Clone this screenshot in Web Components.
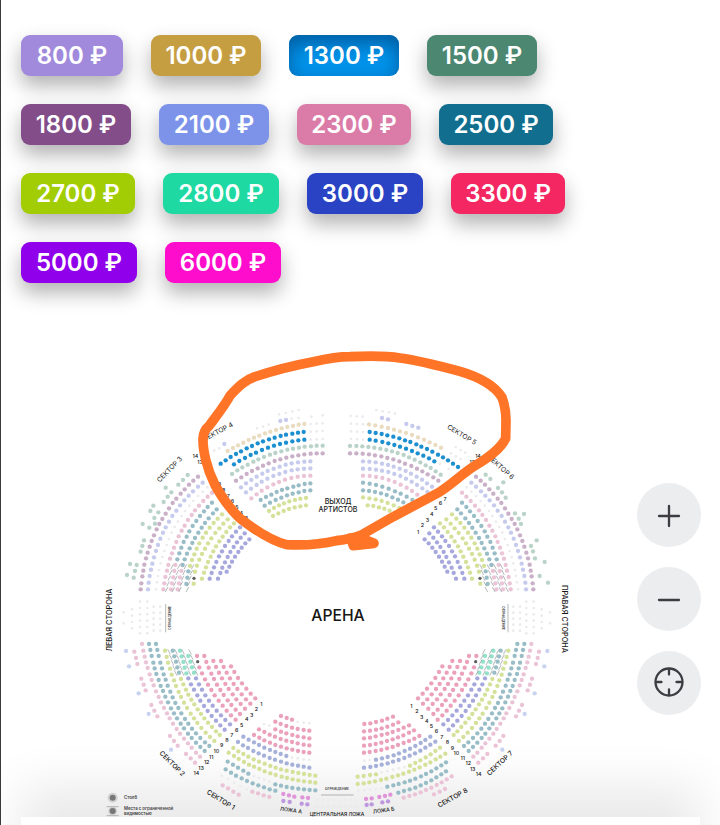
<!DOCTYPE html>
<html lang="ru">
<head>
<meta charset="utf-8">
<meta name="viewport" content="width=device-width, initial-scale=1">
<title>Выбор мест</title>
<style>
body { margin: 0; background: #fff; font-family: Inter, "Open Sans", sans-serif; color: #111; }
</style>
</head>
<body>
<ticket-page>
  <price-list slot="prices">
    <price-chip size="s" color="#a18adb">800 ₽</price-chip>
    <price-chip size="m" color="#c59e42">1000 ₽</price-chip>
    <price-chip size="m" color="#0092e9" selected>1300 ₽</price-chip>
    <price-chip size="m" color="#4b8771">1500 ₽</price-chip>
    <price-chip size="m" color="#834d89">1800 ₽</price-chip>
    <price-chip size="m" color="#7d93e9">2100 ₽</price-chip>
    <price-chip size="l" color="#db7ba8">2300 ₽</price-chip>
    <price-chip size="l" color="#116e8e">2500 ₽</price-chip>
    <price-chip size="l" color="#a2cd05">2700 ₽</price-chip>
    <price-chip size="xl" color="#1ed9a2">2800 ₽</price-chip>
    <price-chip size="xl" color="#2a43c4">3000 ₽</price-chip>
    <price-chip size="l" color="#f42763">3300 ₽</price-chip>
    <price-chip size="xl" color="#9100ea">5000 ₽</price-chip>
    <price-chip size="xl" color="#ff0dcc">6000 ₽</price-chip>
  </price-list>
  <seat-map slot="map"></seat-map>
  <zoom-controls slot="controls"></zoom-controls>
</ticket-page>

<script>
const attach = (el, html) => { el.attachShadow({ mode: "open" }).innerHTML = html; };

customElements.define("ticket-page", class extends HTMLElement {
  constructor() {
    super();
    attach(this, `
      <style>
        :host { display: flex; flex-direction: column; min-height: 100vh; box-sizing: border-box; border-left: 1px solid #3a3a3e; overflow: hidden; }
        .map { position: relative; z-index: 1; }
        .controls { position: absolute; right: 19px; top: 153px; }
        .panel { flex: 1 0 108px; margin: 0 20px -100px; background: #fff; box-shadow: 0 -30px 50px rgba(0,0,0,.09); }
      </style>
      <slot name="prices"></slot>
      <div class="map"><slot name="map"></slot><div class="controls"><slot name="controls"></slot></div></div>
      <div class="panel"></div>`);
  }
});

customElements.define("price-list", class extends HTMLElement {
  constructor() {
    super();
    attach(this, `
      <style>
        :host { display: flex; flex-wrap: wrap; gap: 28px; padding: 35px 80px 47px 20px; }
      </style><slot></slot>`);
  }
});

customElements.define("price-chip", class extends HTMLElement {
  connectedCallback() {
    if (this.shadowRoot) return;
    attach(this, `
      <style>
        :host { display: block; width: 110px; }
        :host([size="s"]) { width: 102px; }
        :host([size="l"]) { width: 114px; }
        :host([size="xl"]) { width: 116px; }
        button { display: block; width: 100%; height: 41px; padding: 0; border: 0; border-radius: 9px; font: 600 24px/40px Inter, sans-serif; color: #fff; white-space: nowrap; background: ${this.getAttribute("color")}; box-shadow: 0 10px 20px rgba(0,0,0,.3); cursor: pointer; }
        :host([selected]) button { box-shadow: inset 0 8px 18px rgba(0,50,100,.55); }
      </style>
      <button type="button" aria-pressed="${this.hasAttribute("selected")}"><slot></slot></button>`);
  }
});

customElements.define("zoom-controls", class extends HTMLElement {
  constructor() {
    super();
    attach(this, `
      <style>
        :host { display: grid; gap: 20px; }
        button { display: grid; place-items: center; width: 64px; height: 64px; padding: 0; border: 0; border-radius: 50%; background: #ecedef; cursor: pointer; }
        svg { display: block; fill: none; stroke: #3c3c42; stroke-width: 2.3; stroke-linecap: round; }
      </style>
      <button type="button" aria-label="Увеличить"><svg width="32" height="32" viewBox="0 0 32 32"><path d="M6 17H26M16 7V27"/></svg></button>
      <button type="button" aria-label="Уменьшить"><svg width="32" height="32" viewBox="0 0 32 32"><path d="M6 17H26"/></svg></button>
      <button type="button" aria-label="По центру"><svg width="32" height="32" viewBox="0 0 32 32"><circle cx="16" cy="15" r="13.5"/><path d="M16 2V7.500M16 22.500V28M3 15H8.500M23.500 15H29"/></svg></button>`);
  }
});

const COLORS = {
  mauve: "#c9afc7", lav: "#c6cbed", sage: "#bad3c8", teal: "#98bdc7", lime: "#d4e199", purple: "#a6a8dd",
  blue: "#1c8fd0", sand: "#eadcc0", rose: "#eba0bb", pink: "#eac4d6", mint: "#94e1cb", magenta: "#e094d9",
  violet: "#be98df", pale: "#ebebed", post: "#606060", steel: "#a5b1d9", dust: "#c8d4ef"
};

/* A row is [colour, count, x1, y1, x2, y2, midX?, midY?]; seats are spread evenly along the curve. */
const LEFT_UPPER = [
  ["mauve", 22, 122, 478, 294, 140, 174, 290], ["lav", 20, 144, 478, 308, 158, 195, 297],
  ["pale", 19, 168, 478, 322, 172, 217, 305], ["pink", 19, 190, 478, 336, 188, 240, 312],
  ["pink", 5, 213, 478, 226, 405], ["pink", 5, 233, 478, 247, 405],
  ["teal", 12, 232, 388, 336, 218, 272, 298], ["teal", 12, 248, 405, 350, 238, 290, 316],
  ["teal", 3, 259, 462, 265, 424], ["lime", 11, 270, 408, 366, 253, 307, 325],
  ["lime", 11, 285, 425, 383, 268, 324, 340], ["lime", 12, 306, 446, 402, 280, 345, 355],
  ["lime", 1, 281, 461, 281, 461],
  ["purple", 11, 329, 446, 420, 292, 367, 362], ["purple", 10, 354, 446, 434, 310, 389, 370],
  ["purple", 8, 380, 425, 448, 328, 411, 372], ["post", 1, 282, 445, 282, 445]
];
const LEFT_LOWER = [
  ["pink", 22, 126, 162, 300, 500, 188, 347], ["teal", 21, 147, 162, 314, 483, 208, 345],
  ["teal", 20, 168, 162, 328, 468, 228, 342], ["lime", 18, 195, 182, 343, 453, 252, 338],
  ["lime", 13, 243, 267, 359, 435, 291, 355], ["purple", 11, 265, 265, 374, 419, 311, 346],
  ["purple", 10, 288, 265, 390, 403, 333, 340], ["teal", 5, 218, 182, 237, 248],
  ["mint", 5, 240, 182, 259, 250], ["mint", 4, 265, 198, 282, 248],
  ["rose", 11, 298, 232, 407, 389, 345, 317], ["rose", 12, 313, 198, 420, 372, 358, 295],
  ["rose", 10, 340, 213, 435, 356, 382, 291], ["rose", 9, 363, 213, 451, 341, 402, 283],
  ["rose", 7, 393, 229, 466, 325, 426, 280], ["rose", 1, 291, 198, 291, 198], ["post", 1, 293, 215, 293, 215],
  ["pink", 3, 103, 185, 112, 222], ["pink", 3, 124, 266, 137, 301], ["pink", 3, 154, 345, 172, 379],
  ["pink", 3, 210, 438, 233, 467], ["pink", 3, 258, 492, 285, 518],
  ["dust", 1, 78, 183, 78, 183], ["dust", 1, 87, 229, 87, 229], ["dust", 1, 116, 310, 116, 310],
  ["dust", 1, 146, 372, 146, 372], ["dust", 1, 213, 479, 213, 479]
];
const SIDE = [
  ["pale", 2, 71, 67, 71, 100], ["pale", 4, 96, 58, 96, 115], ["pale", 6, 120, 35, 120, 130],
  ["pale", 6, 142, 35, 142, 130], ["pale", 5, 161, 50, 161, 122], ["pale", 5, 181, 50, 181, 122]
];
const dots = (c, list) => list.map(([x, y]) => [c, 1, x, y, x, y]);

const SECTORS = [
  { x: 300, y: 1290, rows: LEFT_UPPER },
  { x: 300, y: 1290, mirror: 2022, rows: LEFT_UPPER },
  { x: 300, y: 1290, rows: dots("sage", [[263,135],[249,150],[235,164],[197,173],[214,187],[203,200],[191,216],[160,227],[151,243],[175,247],[163,264],[165,281],[148,293],[128,282],[132,331],[127,348],[122,365],[90,402],[110,405],[105,423],[81,435],[101,443]]) },
  { x: 1320, y: 1290, rows: dots("sage", [[137,134],[151,147],[190,157],[174,174],[186,187],[197,203],[225,250],[252,252],[236,266],[243,282],[290,331],[273,348],[279,364],[285,385],[314,396],[299,438],[324,458]]) },
  { x: 300, y: 1770, rows: SIDE }, { x: 300, y: 1770, mirror: 2021, rows: SIDE },
  { x: 300, y: 1770, rows: LEFT_LOWER }, { x: 300, y: 1770, mirror: 2020, rows: LEFT_LOWER },
  { x: 570, y: 1035, rows: [
    ["pale", 4, 267, 208, 326, 195], ["pale", 2, 364, 215, 398, 211], ["pale", 2, 305, 221, 326, 219],
    ["pale", 3, 201, 250, 236, 239], ["lav", 2, 271, 228, 288, 225], ["pale", 2, 73, 317, 88, 310], ["lav", 1, 103, 297, 103, 297],
    ["sand", 15, 113, 318, 343, 237, 226, 265], ["pale", 3, 362, 237, 398, 235], ["pale", 3, 362, 260, 398, 258], ["pale", 3, 362, 284, 398, 282],
    ["blue", 16, 92, 356, 341, 261, 212, 292], ["blue", 13, 132, 358, 343, 284, 235, 308],
    ["sage", 17, 126, 387, 398, 302, 256, 324], ["mauve", 16, 138, 407, 398, 325, 264, 345],
    ["lav", 13, 153, 427, 361, 349, 253, 370], ["lav", 12, 168, 442, 361, 370, 261, 389],
    ["pink", 11, 184, 460, 361, 392, 269, 410], ["teal", 10, 212, 465, 361, 415, 285, 432],
    ["teal", 9, 224, 482, 361, 436, 292, 451], ["lime", 8, 237, 498, 348, 459, 290, 472], ["lime", 7, 249, 513, 348, 481, 298, 492]] },
  { x: 1005, y: 1035, rows: [
    ["pale", 4, 124, 195, 180, 206], ["pale", 3, 47, 213, 83, 215], ["lav", 2, 141, 219, 159, 223], ["lav", 3, 214, 237, 250, 248],
    ["pale", 3, 48, 236, 84, 238], ["pale", 3, 48, 259, 84, 261], ["pale", 3, 48, 282, 84, 284],
    ["sand", 13, 102, 238, 318, 308, 215, 265], ["pale", 3, 362, 306, 391, 323], ["pale", 3, 348, 325, 377, 342],
    ["blue", 17, 104, 261, 369, 366, 241, 297], ["blue", 12, 104, 284, 298, 349, 204, 308],
    ["pale", 2, 314, 357, 341, 372], ["sage", 17, 45, 303, 317, 389, 187, 324], ["mauve", 16, 45, 325, 310, 407, 180, 345],
    ["lav", 13, 84, 349, 291, 425, 191, 370], ["lav", 12, 84, 371, 277, 441, 184, 389],
    ["pink", 11, 84, 392, 262, 460, 176, 410], ["teal", 9, 84, 413, 232, 465, 160, 431],
    ["teal", 9, 84, 436, 221, 481, 154, 450], ["lime", 8, 84, 457, 209, 498, 150, 471], ["lime", 7, 98, 481, 195, 511, 148, 491]] },
  { x: 720, y: 2070, rows: [
    ["rose", 3, 123, 78, 156, 89], ["pale", 3, 173, 96, 208, 100], ["rose", 7, 106, 95, 208, 122, 156, 113],
    ["pale", 2, 72, 102, 88, 107], ["rose", 7, 106, 118, 208, 145, 156, 135], ["rose", 10, 57, 118, 208, 166, 130, 149],
    ["rose", 11, 42, 135, 208, 188, 122, 170], ["steel", 9, 10, 140, 139, 198, 72, 172], ["pale", 4, 156, 203, 208, 210],
    ["steel", 14, -6, 156, 208, 233, 92, 205], ["lime", 16, -20, 174, 226, 257, 92, 228], ["lime", 17, -34, 188, 226, 278, 86, 248],
    ["teal", 5, -37, 215, 25, 251], ["pale", 4, 42, 258, 88, 275], ["teal", 8, 106, 283, 226, 301, 165, 295],
    ["teal", 10, -43, 238, 106, 302, 28, 276], ["pale", 5, -55, 257, 20, 298], ["pink", 4, -52, 286, -4, 314], ["pink", 4, 37, 305, 88, 321],
    ["rose", 6, 373, 102, 459, 80, 417, 94], ["rose", 7, 372, 124, 475, 97, 425, 115], ["rose", 9, 372, 145, 507, 106, 441, 131],
    ["rose", 10, 372, 167, 522, 121, 449, 151], ["rose", 11, 372, 188, 538, 138, 457, 171], ["pale", 2, 373, 212, 389, 210],
    ["steel", 11, 408, 209, 571, 140, 492, 184], ["steel", 14, 372, 233, 586, 155, 484, 207], ["lime", 4, 353, 260, 408, 253],
    ["pale", 5, 425, 247, 493, 231], ["lime", 7, 510, 227, 600, 173, 557, 202], ["lime", 17, 353, 282, 616, 191, 490, 251],
    ["pale", 5, 355, 303, 425, 295], ["teal", 12, 442, 290, 618, 217, 533, 263], ["teal", 10, 475, 308, 618, 244, 549, 283],
    ["pink", 10, 491, 323, 635, 259, 566, 297], ["pink", 3, 582, 313, 615, 297],
    ["magenta", 3, 130, 312, 163, 320], ["magenta", 2, 187, 322, 204, 324], ["violet", 2, 130, 333, 149, 336], ["violet", 2, 185, 341, 202, 343],
    ["magenta", 2, 378, 327, 395, 325], ["magenta", 3, 418, 321, 451, 314], ["violet", 2, 380, 345, 395, 343], ["violet", 2, 427, 337, 444, 334],
    ["pale", 8, 232, 330, 348, 330], ["pale", 8, 232, 350, 348, 350]] }
];

/* [text, x, y, rotation, font size, weight] */
const LABELS = [
  ["СЕКТОР 3", 509, 1409, -46, 20, 400], ["СЕКТОР 4", 654, 1296, -28, 20, 400], ["СЕКТОР 5", 1385, 1305, 31, 20, 400],
  ["СЕКТОР 6", 1502, 1402, 42, 20, 400], ["СЕКТОР 2", 516, 2291, 45, 20, 500], ["СЕКТОР 1", 662, 2400, 32, 20, 500],
  ["СЕКТОР 7", 1500, 2290, -43, 20, 500], ["СЕКТОР 8", 1358, 2394, -29, 20, 500],
  ["ЛЕВАЯ СТОРОНА", 327, 1860, -90, 22, 500], ["ПРАВАЯ СТОРОНА", 1693, 1857, 90, 22, 500],
  ["АРЕНА", 1014, 1847, 0, 47, 500], ["ВЫХОД", 1014, 1504, 0, 21, 500], ["АРТИСТОВ", 1014, 1529, 0, 21, 500],
  ["ЛОЖА А", 873, 2430, 8, 16, 500], ["ЛОЖА Б", 1151, 2430, -8, 16, 500], ["ЦЕНТРАЛЬНАЯ ЛОЖА", 1011, 2443, 0, 15, 500],
  ["ОГРАЖДЕНИЕ", 1011, 2368, 0, 10, 500], ["ОГРАЖДЕНИЕ", 509, 1854, -90, 10, 500], ["ОГРАЖДЕНИЕ", 1510, 1854, 90, 10, 500]
];
const NUMBERS = [
  { x: 300, y: 2070, first: 1, at: [[484,42],[469,58],[455,75],[440,87],[425,105],[410,120],[395,135],[381,151],[365,165],[349,183],[334,201],[320,215],[303,233],[289,249]] },
  { x: 1200, y: 1920, first: 1, at: [[34,198],[51,214],[65,231],[80,243],[94,257],[109,273],[125,291],[142,306],[157,324],[169,339],[188,354],[205,369],[218,386],[236,402]] },
  { x: 1005, y: 1035, first: 1, at: [[249,562],[262,540],[277,524],[290,506],[302,490],[316,474],[330,461]] },
  { x: 1005, y: 1035, first: 12, at: [[400,370],[412,351],[429,333]] },
  { x: 570, y: 1035, first: 3, at: [[169,520],[154,503],[141,486],[127,468],[115,453],[101,434],[88,418]] },
  { x: 570, y: 1035, first: 13, at: [[30,351],[16,333]] }
];

function seatsOnCurve(n, x1, y1, x2, y2, mx = (x1 + x2) / 2, my = (y1 + y2) / 2) {
  if (n === 1) return [[x1, y1]];
  const cx = 2 * mx - (x1 + x2) / 2, cy = 2 * my - (y1 + y2) / 2;
  const pts = [], len = [0];
  for (let i = 0; i <= 200; i++) {
    const t = i / 200, u = 1 - t;
    pts.push([u*u*x1 + 2*u*t*cx + t*t*x2, u*u*y1 + 2*u*t*cy + t*t*y2]);
    if (i) len.push(len[i-1] + Math.hypot(pts[i][0] - pts[i-1][0], pts[i][1] - pts[i-1][1]));
  }
  return Array.from({ length: n }, (_, k) => {
    const goal = len[200] * k / (n - 1);
    const i = len.findIndex(l => l >= goal - 0.001);
    return pts[i];
  });
}

customElements.define("seat-map", class extends HTMLElement {
  constructor() {
    super();
    const seats = SECTORS.map(s => s.rows.map(([c, n, ...p]) => seatsOnCurve(n, ...p).map(([x, y]) => {
      const fx = s.mirror ? s.mirror - s.x - x : s.x + x;
      return `<circle cx="${Math.round(fx)}" cy="${Math.round(s.y + y)}" r="${c === "pale" ? 4 : c === "post" ? 5 : 6.5}" fill="${COLORS[c]}"/>`;
    }).join("")).join("")).join("");

    const hatch = (x1, y1, x2, y2) => `M${x1} ${y1}L${x2} ${y2}M${2021 - x1} ${y1}L${2021 - x2} ${y2}`;
    let lines = "";
    for (let c = 0; c < 4; c++) for (let r = 0; r < 5; r++) {
      const x = 508 + c * 20 - r * 4 + (c > 2 ? 2 : 0), y = 1700 + r * 17;
      lines += hatch(x + 12, y - 7, x + 4, y + 8);
    }
    for (let c = 0; c < 4; c++) for (let r = 0; r < 5; r++) {
      const x = 507 + c * 21 + r * 5, y = 1956 + r * 16;
      lines += hatch(x - 4, y - 8, x + 4, y + 7);
    }
    const labels = LABELS.map(([t, x, y, a, f, w]) =>
      `<text transform="translate(${x} ${y}) rotate(${a})" font-size="${f}" font-weight="${w}" text-anchor="middle" dominant-baseline="central">${t}</text>`).join("");
    const numbers = NUMBERS.map(g => g.at.map(([x, y], i) =>
      `<text x="${g.x + x}" y="${g.y + y}" font-size="16" font-weight="500" text-anchor="middle" dominant-baseline="central">${g.first + i}</text>`).join("")).join("");

    attach(this, `
      <style>
        :host { display: block; margin-left: -1px; }
        svg { display: block; width: 100%; height: auto; font-family: Inter, "Open Sans", sans-serif; fill: #161616; }
        .mark { fill: none; stroke: #ff7426; stroke-width: 29; stroke-linejoin: round; stroke-linecap: round; }
        .thin { fill: none; stroke: #8e9695; stroke-width: 2; }
        .legend { font-size: 13px; font-weight: 600; fill: #444; }
      </style>
      <svg viewBox="0 990 2160 1461" role="img" aria-label="Схема зала">
        ${seats}
        <path class="thin" d="${lines}"/>
        <path class="thin" d="M497 1812V1897M1524 1812V1897M963 2385H1061"/>
        ${labels}${numbers}
        <circle cx="338" cy="2393" r="15" fill="#d2d2d2"/><circle cx="338" cy="2393" r="9" fill="#777"/>
        <path class="thin" d="M320 2420H356M320 2447H356"/>
        <circle cx="338" cy="2433" r="13" fill="#cacaca"/><circle cx="338" cy="2433" r="9" fill="#777"/>
        <text class="legend" x="372" y="2397">Столб</text>
        <text class="legend" x="372" y="2430">Места с ограниченной</text>
        <text class="legend" x="372" y="2445">видимостью</text>
        <path class="mark" d="M1050 1070C1110 1067 1170 1069 1200 1074C1260 1082 1320 1098 1380 1114Q1475 1142 1506 1192Q1518 1225 1518 1260L1517 1315C1500 1350 1460 1376 1425 1397C1385 1422 1350 1458 1312 1480L1180 1550L1086 1604C1060 1614 1035 1619 1010 1622C960 1634 900 1636 860 1634C820 1624 775 1596 740 1570C700 1545 665 1490 645 1455C620 1405 608 1350 609 1315Q610 1292 627 1278C655 1240 675 1215 690 1187C715 1160 735 1140 765 1130C810 1115 870 1098 940 1085C980 1076 1020 1070 1050 1070Z"/>
        <path class="mark" d="M1050 1614L1090 1617L1122 1630L1060 1637L1054 1620"/>
      </svg>`);
  }
});
</script>
</body>
</html>
